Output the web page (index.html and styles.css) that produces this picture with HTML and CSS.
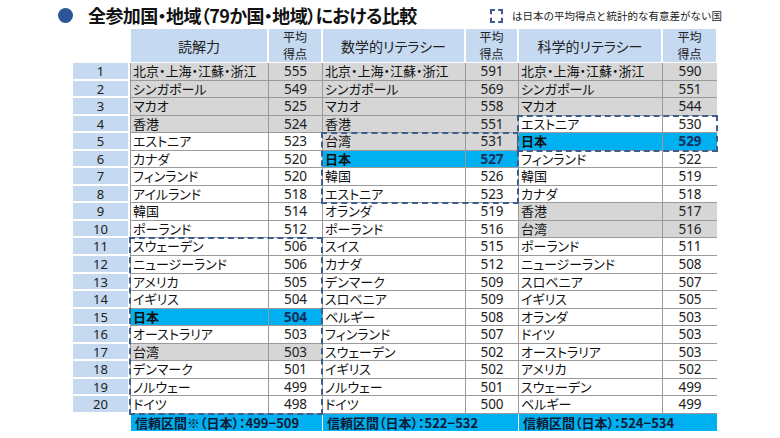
FILE: index.html
```html
<!DOCTYPE html>
<html lang="ja">
<head>
<meta charset="utf-8">
<title>全参加国・地域における比較</title>
<link rel="stylesheet" href="styles.css">
</head>
<body>
<div class="page">
  <div class="top">
    <span class="bullet"></span>
    <h1 class="title">全参加国・地域（79か国・地域）における比較</h1>
    <div class="legend"><span class="legend-box"></span><span class="legend-text">は日本の平均得点と統計的な有意差がない国</span></div>
  </div>
  <div class="table">
    <div class="rank-col">
      <div class="rank-head"></div>
      <div class="rank">1</div><div class="rank">2</div><div class="rank">3</div><div class="rank">4</div><div class="rank">5</div>
      <div class="rank">6</div><div class="rank">7</div><div class="rank">8</div><div class="rank">9</div><div class="rank">10</div>
      <div class="rank">11</div><div class="rank">12</div><div class="rank">13</div><div class="rank">14</div><div class="rank">15</div>
      <div class="rank">16</div><div class="rank">17</div><div class="rank">18</div><div class="rank">19</div><div class="rank">20</div>
    </div>

    <div class="subject reading">
      <div class="head"><div class="h-name">読解力</div><div class="h-score"><span>平均</span><span>得点</span></div></div>
      <div class="body">
        <div class="row gray"><span class="name">北京・上海・江蘇・浙江</span><span class="score">555</span></div>
        <div class="row gray"><span class="name">シンガポール</span><span class="score">549</span></div>
        <div class="row gray"><span class="name">マカオ</span><span class="score">525</span></div>
        <div class="row gray"><span class="name">香港</span><span class="score">524</span></div>
        <div class="row"><span class="name">エストニア</span><span class="score">523</span></div>
        <div class="row"><span class="name">カナダ</span><span class="score">520</span></div>
        <div class="row"><span class="name">フィンランド</span><span class="score">520</span></div>
        <div class="row"><span class="name">アイルランド</span><span class="score">518</span></div>
        <div class="row"><span class="name">韓国</span><span class="score">514</span></div>
        <div class="row"><span class="name">ポーランド</span><span class="score">512</span></div>
        <div class="sig">
          <div class="row"><span class="name">スウェーデン</span><span class="score">506</span></div>
          <div class="row"><span class="name">ニュージーランド</span><span class="score">506</span></div>
          <div class="row"><span class="name">アメリカ</span><span class="score">505</span></div>
          <div class="row"><span class="name">イギリス</span><span class="score">504</span></div>
          <div class="row japan"><span class="name">日本</span><span class="score">504</span></div>
          <div class="row"><span class="name">オーストラリア</span><span class="score">503</span></div>
          <div class="row gray"><span class="name">台湾</span><span class="score">503</span></div>
          <div class="row"><span class="name">デンマーク</span><span class="score">501</span></div>
          <div class="row"><span class="name">ノルウェー</span><span class="score">499</span></div>
          <div class="row"><span class="name">ドイツ</span><span class="score">498</span></div>
        </div>
      </div>
      <div class="foot">信頼区間※（日本）：499−509</div>
    </div>

    <div class="subject math">
      <div class="head"><div class="h-name">数学的リテラシー</div><div class="h-score"><span>平均</span><span>得点</span></div></div>
      <div class="body">
        <div class="row gray"><span class="name">北京・上海・江蘇・浙江</span><span class="score">591</span></div>
        <div class="row gray"><span class="name">シンガポール</span><span class="score">569</span></div>
        <div class="row gray"><span class="name">マカオ</span><span class="score">558</span></div>
        <div class="row gray"><span class="name">香港</span><span class="score">551</span></div>
        <div class="sig">
          <div class="row gray"><span class="name">台湾</span><span class="score">531</span></div>
          <div class="row japan"><span class="name">日本</span><span class="score">527</span></div>
          <div class="row"><span class="name">韓国</span><span class="score">526</span></div>
          <div class="row"><span class="name">エストニア</span><span class="score">523</span></div>
        </div>
        <div class="row"><span class="name">オランダ</span><span class="score">519</span></div>
        <div class="row"><span class="name">ポーランド</span><span class="score">516</span></div>
        <div class="row"><span class="name">スイス</span><span class="score">515</span></div>
        <div class="row"><span class="name">カナダ</span><span class="score">512</span></div>
        <div class="row"><span class="name">デンマーク</span><span class="score">509</span></div>
        <div class="row"><span class="name">スロベニア</span><span class="score">509</span></div>
        <div class="row"><span class="name">ベルギー</span><span class="score">508</span></div>
        <div class="row"><span class="name">フィンランド</span><span class="score">507</span></div>
        <div class="row"><span class="name">スウェーデン</span><span class="score">502</span></div>
        <div class="row"><span class="name">イギリス</span><span class="score">502</span></div>
        <div class="row"><span class="name">ノルウェー</span><span class="score">501</span></div>
        <div class="row"><span class="name">ドイツ</span><span class="score">500</span></div>
      </div>
      <div class="foot">信頼区間（日本）：522−532</div>
    </div>

    <div class="subject science">
      <div class="head"><div class="h-name">科学的リテラシー</div><div class="h-score"><span>平均</span><span>得点</span></div></div>
      <div class="body">
        <div class="row gray"><span class="name">北京・上海・江蘇・浙江</span><span class="score">590</span></div>
        <div class="row gray"><span class="name">シンガポール</span><span class="score">551</span></div>
        <div class="row gray"><span class="name">マカオ</span><span class="score">544</span></div>
        <div class="sig">
          <div class="row"><span class="name">エストニア</span><span class="score">530</span></div>
          <div class="row japan"><span class="name">日本</span><span class="score">529</span></div>
        </div>
        <div class="row"><span class="name">フィンランド</span><span class="score">522</span></div>
        <div class="row"><span class="name">韓国</span><span class="score">519</span></div>
        <div class="row"><span class="name">カナダ</span><span class="score">518</span></div>
        <div class="row gray"><span class="name">香港</span><span class="score">517</span></div>
        <div class="row gray"><span class="name">台湾</span><span class="score">516</span></div>
        <div class="row"><span class="name">ポーランド</span><span class="score">511</span></div>
        <div class="row"><span class="name">ニュージーランド</span><span class="score">508</span></div>
        <div class="row"><span class="name">スロベニア</span><span class="score">507</span></div>
        <div class="row"><span class="name">イギリス</span><span class="score">505</span></div>
        <div class="row"><span class="name">オランダ</span><span class="score">503</span></div>
        <div class="row"><span class="name">ドイツ</span><span class="score">503</span></div>
        <div class="row"><span class="name">オーストラリア</span><span class="score">503</span></div>
        <div class="row"><span class="name">アメリカ</span><span class="score">502</span></div>
        <div class="row"><span class="name">スウェーデン</span><span class="score">499</span></div>
        <div class="row"><span class="name">ベルギー</span><span class="score">499</span></div>
      </div>
      <div class="foot">信頼区間（日本）：524−534</div>
    </div>
  </div>
</div>
</body>
</html>
```

FILE: styles.css
```css
* { box-sizing: border-box; }
html, body { margin: 0; padding: 0; background: #fff; }
body {
  width: 780px;
  height: 438px;
  overflow: hidden;
  font-family: "Noto Sans CJK JP", "Noto Sans", sans-serif;
  color: #111;
}
.page { width: 780px; height: 438px; }

.top {
  height: 28px;
  display: flex;
  align-items: center;
  padding: 1px 58px 0 58px;
}
.bullet {
  width: 15px;
  height: 15px;
  border-radius: 50%;
  background: #2a5596;
  flex: none;
  margin-top: 2px;
}
.title {
  margin: 0 0 0 15px;
  font-size: 18px;
  font-weight: 700;
  line-height: 22px;
  letter-spacing: -0.6px;
  color: #111;
  font-feature-settings: "palt";
  white-space: nowrap;
}
.legend {
  margin-left: auto;
  margin-top: 2px;
  display: flex;
  align-items: center;
  gap: 9px;
}
.legend-box {
  width: 13px;
  height: 14px;
  border: 2px dashed #3d5d8c;
  flex: none;
}
.legend-text {
  font-size: 10.5px;
  line-height: 14px;
  color: #222;
  white-space: nowrap;
}

.table {
  display: flex;
  margin-left: 73px;
}
.rank-col {
  width: 55px;
  margin-right: 2px;
  display: flex;
  flex-direction: column;
}
.rank-head { height: 35px; }
.rank {
  height: 17.55px;
  background: #c5d9f1;
  border-bottom: 2px solid #fff;
  font-family: "Noto Sans", "Noto Sans CJK JP", sans-serif;
  font-size: 13px;
  line-height: 16px;
  text-align: center;
  color: #222;
}

.subject { display: flex; flex-direction: column; }
.reading { width: 192px; }
.math { width: 196px; }
.science { width: 199px; }
.reading .name, .reading .h-name { width: 138px; }
.math .name, .math .h-name { width: 143px; }
.science .name, .science .h-name { width: 144px; }

.head {
  display: flex;
  height: 33px;
  margin-top: 1px;
  margin-bottom: 1px;
}
.h-name, .h-score {
  background: #c5d9f1;
  border-left: 1px solid #fff;
  border-right: 1px solid #fff;
  display: flex;
  align-items: center;
  justify-content: center;
  text-align: center;
  color: #222;
  font-feature-settings: "palt";
}
.h-name { font-size: 14px; }
.h-score {
  flex: 1;
  flex-direction: column;
  gap: 1px;
  font-size: 12px;
  line-height: 16.5px;
}

.body { display: flex; flex-direction: column; }
.row {
  display: flex;
  height: 17.55px;
  border-bottom: 1px solid #9a9a9a;
  background: #fff;
}
.row.gray { background: #d6d6d6; }
.row.japan { background: #00b0f0; font-weight: 700; }
.name {
  border-left: 1px solid #9a9a9a;
  padding-left: 2px;
  font-size: 13px;
  line-height: 16px;
  white-space: nowrap;
  font-feature-settings: "palt";
}
.score {
  flex: 1;
  border-left: 1px solid #9a9a9a;
  text-align: center;
  font-family: "Noto Sans", "Noto Sans CJK JP", sans-serif;
  font-size: 13.5px;
  line-height: 16px;
  color: #222;
}
.japan .score { color: #14315e; }

.sig { position: relative; }
.sig::after {
  content: "";
  position: absolute;
  top: -1px;
  bottom: -1px;
  left: -1px;
  right: -1px;
  border: 2px dashed #3d5d8c;
  pointer-events: none;
}

.foot {
  height: 17px;
  background: #00b0f0;
  border-left: 1px solid #fff;
  padding-left: 4px;
  font-size: 13px;
  font-weight: 700;
  line-height: 17px;
  color: #0d1b33;
  white-space: nowrap;
  font-feature-settings: "palt";
}
```
